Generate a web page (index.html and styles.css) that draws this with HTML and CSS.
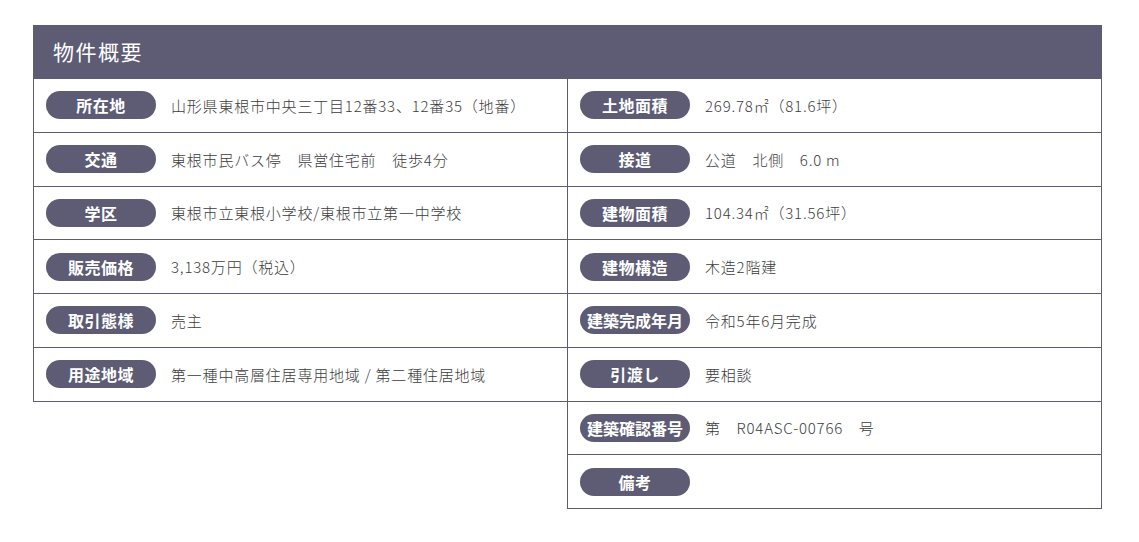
FILE: index.html
```html
<!DOCTYPE html>
<html lang="ja">
<head>
<meta charset="utf-8">
<title>物件概要</title>
<link rel="stylesheet" href="styles.css">
</head>
<body>
<section class="outline">
  <h2 class="outline-title">物件概要</h2>
  <div class="outline-grid">
    <dl class="outline-col">
      <div class="row"><dt class="pill">所在地</dt><dd class="val">山形県東根市中央三丁目12番33、12番35（地番）</dd></div>
      <div class="row"><dt class="pill">交通</dt><dd class="val">東根市民バス停　県営住宅前　徒歩4分</dd></div>
      <div class="row"><dt class="pill">学区</dt><dd class="val">東根市立東根小学校/東根市立第一中学校</dd></div>
      <div class="row"><dt class="pill">販売価格</dt><dd class="val">3,138万円（税込）</dd></div>
      <div class="row"><dt class="pill">取引態様</dt><dd class="val">売主</dd></div>
      <div class="row"><dt class="pill">用途地域</dt><dd class="val">第一種中高層住居専用地域 / 第二種住居地域</dd></div>
    </dl>
    <dl class="outline-col outline-col--right">
      <div class="row"><dt class="pill">土地面積</dt><dd class="val">269.78㎡（81.6坪）</dd></div>
      <div class="row"><dt class="pill">接道</dt><dd class="val">公道　北側　6.0 m</dd></div>
      <div class="row"><dt class="pill">建物面積</dt><dd class="val">104.34㎡（31.56坪）</dd></div>
      <div class="row"><dt class="pill">建物構造</dt><dd class="val">木造2階建</dd></div>
      <div class="row"><dt class="pill pill--tight">建築完成年月</dt><dd class="val">令和5年6月完成</dd></div>
      <div class="row"><dt class="pill">引渡し</dt><dd class="val">要相談</dd></div>
      <div class="row"><dt class="pill pill--tight">建築確認番号</dt><dd class="val">第　R04ASC-00766　号</dd></div>
      <div class="row"><dt class="pill">備考</dt><dd class="val"></dd></div>
    </dl>
  </div>
</section>
</body>
</html>
```

FILE: styles.css
```css
html, body {
  margin: 0;
  padding: 0;
  background: #ffffff;
}

body {
  font-family: "Noto Sans CJK JP", "Noto Sans", sans-serif;
  color: #444444;
  padding: 25px 0 0 33px;
}

.outline {
  width: 1069px;
}

.outline-title {
  margin: 0;
  height: 54px;
  box-sizing: border-box;
  padding: 0 0 3px 20px;
  display: flex;
  align-items: center;
  background: #5d5c74;
  color: #ffffff;
  font-size: 21px;
  font-weight: 400;
  letter-spacing: 1.5px;
}

.outline-grid {
  display: flex;
  align-items: flex-start;
}

.outline-col {
  flex: 1;
  margin: 0;
  border-left: 1px solid #5d5c74;
}

.outline-col--right {
  border-right: 1px solid #5d5c74;
}

.row {
  display: flex;
  align-items: center;
  gap: 15px;
  height: 53.75px;
  box-sizing: border-box;
  padding: 0 12px;
  border-bottom: 1px solid #5d5c74;
}

.pill {
  flex: none;
  width: 110px;
  height: 28px;
  border-radius: 14px;
  background: #5d5c74;
  color: #ffffff;
  font-size: 16px;
  font-weight: 700;
  letter-spacing: 0.5px;
  display: flex;
  align-items: center;
  justify-content: center;
  white-space: nowrap;
}

.pill--tight {
  letter-spacing: 0;
}

.val {
  margin: 0;
  font-size: 15px;
  font-weight: 300;
  color: #3c3c3c;
  letter-spacing: 0.8px;
  white-space: nowrap;
}
```
